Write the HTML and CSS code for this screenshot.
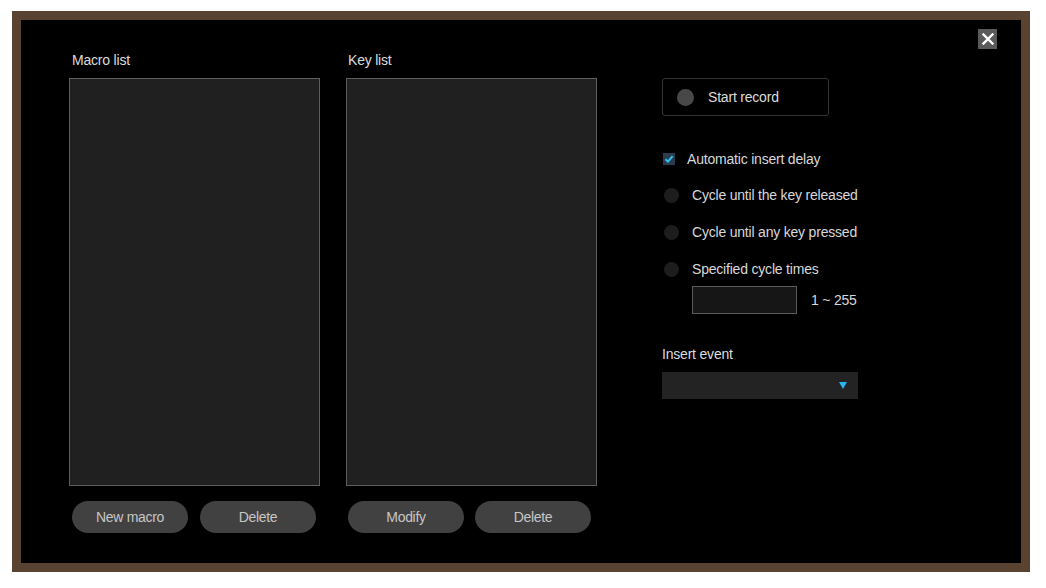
FILE: index.html
```html
<!DOCTYPE html>
<html>
<head>
<meta charset="utf-8">
<link rel="stylesheet" href="styles.css">
</head>
<body>
<div class="frame">
  <div class="inner">
    <button class="close" aria-label="Close">
      <svg width="12" height="12" viewBox="0 0 12 12"><path d="M1.5 1.5 L10.5 10.5 M10.5 1.5 L1.5 10.5" stroke="#fff" stroke-width="2.4" stroke-linecap="square"/></svg>
    </button>
    <div class="col list-col">
      <div class="label">Macro list</div>
      <div class="listbox"></div>
      <div class="btns">
        <button class="pill">New macro</button>
        <button class="pill">Delete</button>
      </div>
    </div>
    <div class="col list-col key-col">
      <div class="label">Key list</div>
      <div class="listbox"></div>
      <div class="btns">
        <button class="pill">Modify</button>
        <button class="pill">Delete</button>
      </div>
    </div>
    <div class="col right">
      <div class="record"><span class="dot"></span><span>Start record</span></div>
      <div class="opt check-row">
        <span class="check"><svg width="10" height="10" viewBox="0 0 10 10"><path d="M1.5 5.2 L4 7.6 L8.6 2.2" fill="none" stroke="#2ec4ec" stroke-width="2"/></svg></span>
        <span>Automatic insert delay</span>
      </div>
      <div class="opt radio-row"><span class="radio"></span><span>Cycle until the key released</span></div>
      <div class="opt radio-row"><span class="radio"></span><span>Cycle until any key pressed</span></div>
      <div class="opt radio-row"><span class="radio"></span><span>Specified cycle times</span></div>
      <div class="times"><span class="input"></span><span>1 ~ 255</span></div>
      <div class="label ev-label">Insert event</div>
      <div class="select"><span class="arrow"></span></div>
    </div>
  </div>
</div>
</body>
</html>
```
FILE: styles.css
```css
html, body {
  margin: 0;
  padding: 0;
  background: #ffffff;
}
body {
  font-family: "Liberation Sans", Arial, sans-serif;
  font-size: 14px;
  color: #d8d8d8;
  letter-spacing: -0.2px;
}
.frame {
  margin: 11px 0 0 12px;
  width: 1000px;
  height: 543px;
  border: 9px solid #5a4231;
  background: #000;
}
.inner {
  position: relative;
  height: 100%;
  box-sizing: border-box;
  padding: 31px 0 0 48px;
  display: flex;
  align-items: flex-start;
}
.close {
  position: absolute;
  top: 9px;
  right: 24px;
  width: 19px;
  height: 20px;
  padding: 0;
  border: none;
  background: #5a5a5a;
  display: flex;
  align-items: center;
  justify-content: center;
}
.col {
  display: flex;
  flex-direction: column;
}
.list-col {
  width: 251px;
}
.key-col {
  margin-left: 26px;
}
.label {
  height: 18px;
  line-height: 18px;
  padding-left: 3px;
  margin-bottom: 9px;
  color: #dcdcdc;
}
.key-col .label { padding-left: 2px; }
.listbox {
  height: 406px;
  border: 1px solid #5e5e5e;
  background: #202020;
}
.btns {
  display: flex;
  gap: 12px;
  padding-left: 3px;
  margin-top: 15px;
}
.key-col .btns { padding-left: 2px; gap: 11px; }
.pill {
  width: 116px;
  height: 32px;
  border: none;
  border-radius: 16px;
  background: #414141;
  color: #c6c6c6;
  font-family: "Liberation Sans", Arial, sans-serif;
  font-size: 14px;
  letter-spacing: -0.3px;
  padding: 0;
}
.right {
  margin-left: 65px;
  margin-top: 27px;
  width: 220px;
}
.record {
  width: 165px;
  height: 36px;
  border: 1px solid #333;
  border-radius: 3px;
  display: flex;
  align-items: center;
  color: #dcdcdc;
}
.dot {
  width: 17px;
  height: 17px;
  border-radius: 50%;
  background: #484848;
  margin: 0 14px 0 14px;
}
.opt {
  display: flex;
  align-items: center;
  height: 20px;
  color: #d8d8d8;
  white-space: nowrap;
}
.check-row {
  margin-top: 33px;
}
.check {
  width: 12px;
  height: 12px;
  background: #2a3c4e;
  margin: 0 12px 0 1px;
  display: flex;
  align-items: center;
  justify-content: center;
}
.radio-row {
  margin-top: 17px;
}
.check-row + .radio-row {
  margin-top: 16px;
}
.radio {
  width: 15px;
  height: 15px;
  border-radius: 50%;
  background: #1d1d1d;
  margin: 0 13px 0 2px;
}
.times {
  display: flex;
  align-items: center;
  margin: 7px 0 0 30px;
  color: #d8d8d8;
}
.input {
  width: 103px;
  height: 26px;
  border: 1px solid #5a5a5a;
  background: #161616;
  margin-right: 14px;
}
.ev-label {
  padding-left: 0;
  margin: 31px 0 9px 0;
}
.select {
  width: 196px;
  height: 27px;
  background: #232323;
  position: relative;
  display: flex;
  align-items: center;
  justify-content: flex-end;
}
.arrow {
  width: 0;
  height: 0;
  border-left: 4px solid transparent;
  border-right: 4px solid transparent;
  border-top: 7px solid #29b6f0;
  margin-right: 11px;
}
```
